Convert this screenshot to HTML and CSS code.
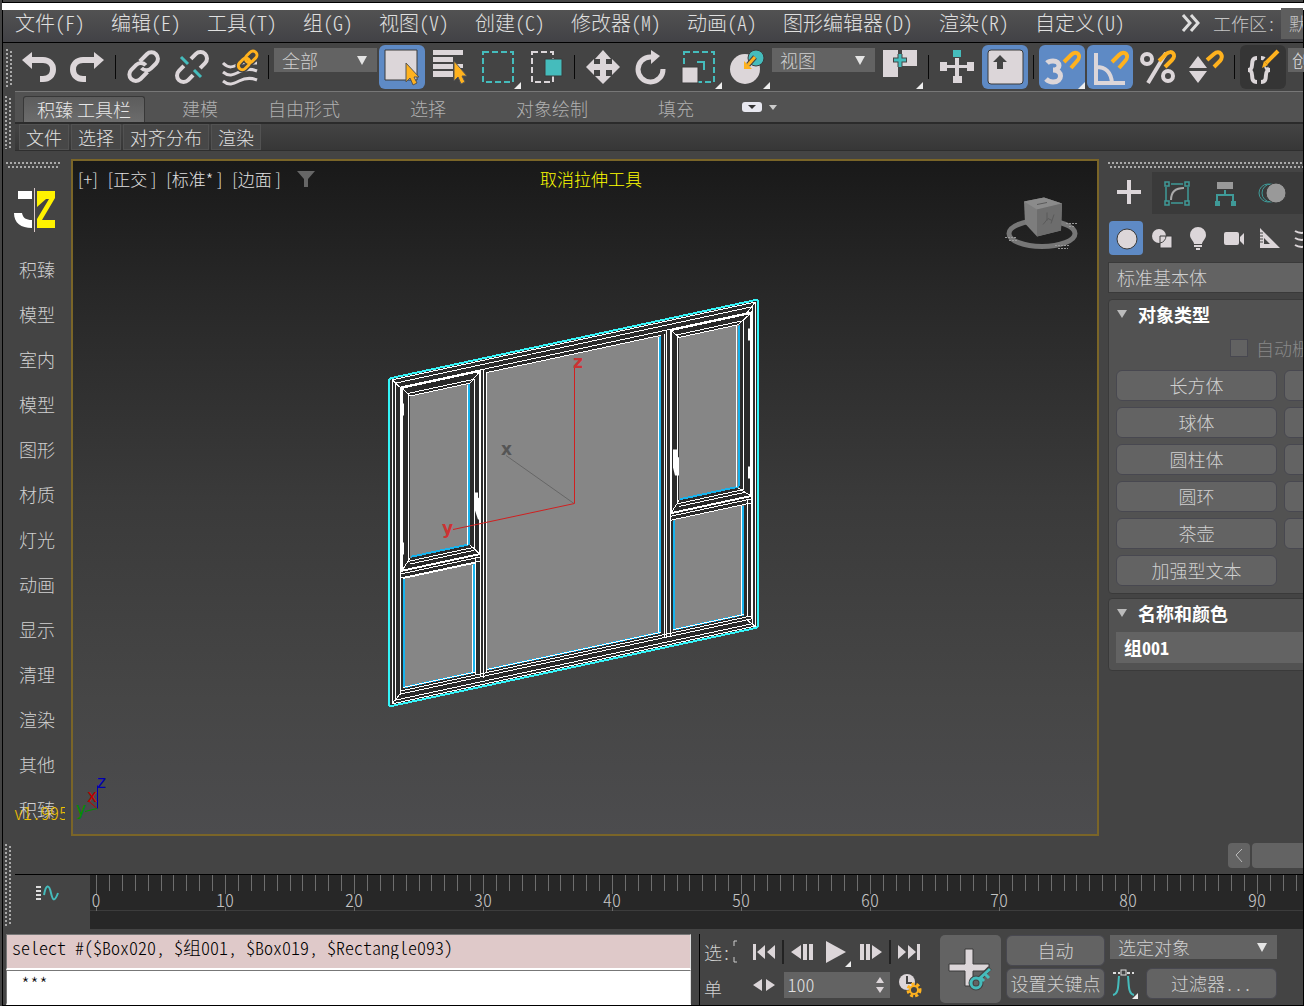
FILE: index.html
```
<!DOCTYPE html>
<html lang="zh-CN">

<head>
    <meta charset="UTF-8">
    <meta name="viewport" content="width=device-width, initial-scale=1.0">
    <title>积臻 工具栏</title>
    <link rel="stylesheet" href="styles.css">
</head>

<body>
    <div class="app">
        <div class="title-strip"></div>

        <!-- Menu Bar -->
        <nav class="menu-bar">
            <button class="menu-item">文件(F)</button>
            <button class="menu-item">编辑(E)</button>
            <button class="menu-item">工具(T)</button>
            <button class="menu-item">组(G)</button>
            <button class="menu-item">视图(V)</button>
            <button class="menu-item">创建(C)</button>
            <button class="menu-item">修改器(M)</button>
            <button class="menu-item">动画(A)</button>
            <button class="menu-item">图形编辑器(D)</button>
            <button class="menu-item">渲染(R)</button>
            <button class="menu-item">自定义(U)</button>
            <div class="workspace">
                <svg class="more-icon" viewBox="0 0 20 18"><path d="M2 1l7 8-7 8M10 1l7 8-7 8" /></svg>
                <label for="workspace">工作区:</label>
                <select id="workspace" class="workspace-select"><option>默认</option></select>
            </div>
        </nav>

        <!-- Main Toolbar -->
        <div class="toolbar">
            <div class="grip grip-left"></div>
            <button class="tool" aria-label="撤消"><svg viewBox="0 0 46 44"><path class="fl" d="M6 15L16 7v17z" /><path class="st" stroke-width="6" d="M15 15h12c6 0 10 4 10 9.500s-4 9.500-10 9.500h-3" /></svg></button>
            <button class="tool" aria-label="重做"><svg viewBox="0 0 46 44"><path class="fl" d="M40 15L30 7v17z" /><path class="st" stroke-width="6" d="M31 15H19c-6 0-10 4-10 9.500S13 34 19 34h3" /></svg></button>
            <span class="sep"></span>
            <button class="tool" aria-label="链接"><svg viewBox="0 0 46 44"><g class="st" stroke-width="4" transform="rotate(-45 23 22)"><path d="M22 28h-10a6.500 6.500 0 0 1 0-13h7a6.500 6.500 0 0 1 6.500 7" /><path d="M24 15h10a6.500 6.500 0 0 1 0 13h-7a6.500 6.500 0 0 1-6.500-7" /></g></svg></button>
            <button class="tool" aria-label="取消链接"><svg viewBox="0 0 46 44"><g class="st" stroke-width="4" transform="rotate(-45 23 22)"><path d="M18 28.500h-7a6.500 6.500 0 0 1 0-13h7" /><path d="M28 15.500h7a6.500 6.500 0 0 1 0 13h-7" /></g><path class="teal-st" stroke-width="3" d="M12 12l7 7M25 25l7 7" /></svg></button>
            <button class="tool" aria-label="绑定到空间扭曲"><svg viewBox="0 0 46 44"><path class="st" stroke-width="3" d="M6 18c6 6 10 4 16 1s11-1 18-1M6 27c6 5 10 3 16 0s11-4 18-1M6 36c6 5 10 3 16 0s11-4 18-1" /><g transform="rotate(-45 31 15)" fill="none" stroke="#444" stroke-width="6"><rect x="19" y="11" width="13" height="8" rx="4" /><rect x="29" y="11" width="13" height="8" rx="4" /></g><g transform="rotate(-45 31 15)" fill="none" stroke="#ffb21e" stroke-width="3"><rect x="19" y="11" width="13" height="8" rx="4" /><rect x="29" y="11" width="13" height="8" rx="4" /></g></svg></button>
            <span class="sep"></span>
            <div class="select-box tool-select"><select aria-label="选择过滤器"><option>全部</option></select></div>
            <button class="tool active" aria-label="选择对象"><svg viewBox="0 0 46 44"><path class="fl ol" d="M6 5h32v30H6z" /><path class="cursor" d="M27 18v19l4-4 3 7 4-2-3-6h5z" /></svg></button>
            <button class="tool" aria-label="按名称选择"><svg viewBox="0 0 46 44"><path class="fl" d="M6 5h30v5H6zM6 12h20v5H6zM6 19h20v5H6zM6 26h20v6H6zM30 19h6v4h-6z" /><path class="cursor" d="M27 16v20l4-4 3 7 4-2-3-6h5z" /></svg></button>
            <button class="tool" aria-label="矩形选择区域"><svg viewBox="0 0 46 44"><rect class="teal-st" x="8" y="7" width="30" height="30" stroke-width="2" stroke-dasharray="6 3" /><path class="corner" d="M46 37v7h-7z" /></svg></button>
            <button class="tool" aria-label="窗口/交叉"><svg viewBox="0 0 46 44"><rect class="st" x="9" y="7" width="21" height="30" stroke-width="2" stroke-dasharray="6 3" /><path class="teal ol" d="M22 14h17v17H22z" /></svg></button>
            <span class="sep"></span>
            <button class="tool" aria-label="选择并移动"><svg viewBox="0 0 46 44"><path class="fl" d="M23 5l8 9h-5v5h6v-5l8 8-8 8v-5h-6v6h5l-8 8-8-8h5v-6h-6v5l-8-8 8-8v5h6v-5h-5z" /></svg></button>
            <button class="tool" aria-label="选择并旋转"><svg viewBox="0 0 46 44"><path class="st" stroke-width="5" d="M25 12h-2a12.500 12.500 0 1 0 12 12" /><path class="fl" d="M23 5l9 6-9 8z" /></svg></button>
            <button class="tool" aria-label="选择并缩放"><svg viewBox="0 0 46 44"><rect class="teal-st" x="8" y="7" width="30" height="30" stroke-width="2" stroke-dasharray="6 3" /><path class="fl ol" d="M6 22h16v16H6z" /><path class="teal-st" stroke-width="2" d="M21 17h7v8" /><path class="corner" d="M46 37v7h-7z" /></svg></button>
            <button class="tool" aria-label="选择并放置"><svg viewBox="0 0 46 44"><circle class="fl" cx="21" cy="24" r="15" /><circle class="teal ol" cx="32" cy="13" r="8" /><path d="M31 12l-7 8" stroke="#444" stroke-width="5" /><path d="M31 12l-7 8" stroke="#ffb21e" stroke-width="3" /><path fill="#ffb21e" d="M20 16v8h8z" /><path class="corner" d="M46 37v7h-7z" /></svg></button>
            <div class="select-box tool-select"><select aria-label="参考坐标系"><option>视图</option></select></div>
            <button class="tool" aria-label="使用轴点中心"><svg viewBox="0 0 46 44"><path class="fl" d="M6 5h15v27H6zM25 5h15v16H25z" /><path d="M23 9v13M16 15h14" stroke="#444" stroke-width="5" /><path class="teal-st" d="M23 9v13M17 15h12" stroke-width="3" /><path class="corner" d="M46 37v7h-7z" /></svg></button>
            <span class="sep"></span>
            <button class="tool" aria-label="选择并操纵"><svg viewBox="0 0 46 44"><path class="fl" d="M21 13h4v7h8v-3h7v9h-7v-3h-8v8h3v7h-9v-7h2v-8h-8v3H6v-9h7v3h8z" /><path class="teal" d="M19 5h8v7h-8z" /></svg></button>
            <button class="tool active" aria-label="键盘快捷键覆盖切换"><svg viewBox="0 0 46 44"><rect class="fl ol" x="6" y="5" width="35" height="34" rx="3" /><path fill="#444" d="M18 10l7 7h-4v7h-6v-7h-4z" /></svg></button>
            <span class="sep"></span>
            <button class="tool active" aria-label="捕捉开关"><svg viewBox="0 0 46 44"><path class="st" stroke-width="5" d="M8 18c2-2 4-2 6-2 8 0 8 9 0 9 10 0 10 12 0 12-3 0-5-1-7-3" /><path class="magnet" d="M25 17l7-7c6-6 11 1 6 6l-6 7" /><path class="corner" d="M46 37v7h-7z" /></svg></button>
            <button class="tool active" aria-label="角度捕捉"><svg viewBox="0 0 46 44"><path class="st" stroke-width="4" d="M9 8v30h29M9 22c10 0 15 5 16 16" /><path class="magnet" d="M25 17l7-7c6-6 11 1 6 6l-6 7" /></svg></button>
            <button class="tool" aria-label="百分比捕捉"><svg viewBox="0 0 46 44"><g class="st" stroke-width="4"><circle cx="12" cy="14" r="5" /><circle cx="33" cy="31" r="5" /><path d="M31 8L13 38" /></g><path class="magnet" d="M24 16l7-7c6-5 11 1 6 6l-7 7" /></svg></button>
            <button class="tool" aria-label="微调器捕捉"><svg viewBox="0 0 46 44"><path class="fl" d="M15 11l9 12H6zM6 26h18l-9 12z" /><path class="magnet" d="M24 15l7-6c6-5 10 2 6 7l-6 6" /></svg></button>
            <span class="sep"></span>
            <button class="tool pressed" aria-label="编辑命名选择集"><svg viewBox="0 0 46 44"><path class="st" stroke-width="4" d="M17 13c-9 0-1 12-9 12 8 0 0 12 9 12M21 13c9 0 1 12 9 12-8 0 0 12-9 12" /><path stroke="#353535" stroke-width="8" d="M24 20L37 6" /><path stroke="#ffb21e" stroke-width="4" d="M26 18L38 6" /><path fill="#ffb21e" d="M22 23l2-7 4 4z" /></svg></button>
            <select class="name-select" aria-label="命名选择集"><option>创建</option></select>
        </div>

        <!-- Ribbon -->
        <div class="ribbon">
            <div class="grip"></div>
            <div class="ribbon-body">
                <div class="ribbon-tabs">
                    <button class="tab tab-current">积臻 工具栏</button>
                    <button class="tab tab-small">建模</button>
                    <button class="tab tab-small tab-last">自由形式</button>
                    <button class="tab">选择</button>
                    <button class="tab">对象绘制</button>
                    <button class="tab">填充</button>
                    <button class="ribbon-toggle" aria-label="最小化"><svg viewBox="0 0 36 14"><rect x="1" y="2" width="20" height="10" rx="3" fill="#e8e8f0" /><path fill="#333" d="M7 5h8l-4 4z" /><path fill="#ccc" d="M28 5h8l-4 5z" /></svg></button>
                </div>
                <div class="ribbon-row">
                    <button class="ribbon-button">文件</button>
                    <button class="ribbon-button">选择</button>
                    <button class="ribbon-button">对齐分布</button>
                    <button class="ribbon-button">渲染</button>
                </div>
            </div>
        </div>

        <div class="workarea">
            <!-- Plugin Sidebar -->
            <aside class="sidebar">
                <div class="grip-h"></div>
                <svg class="logo" viewBox="0 0 42 44"><path fill="#fff" d="M4 3h14v8H4zM18 40c-11 0-18-5-18-15h8c1 5 4 7 10 7z" /><path stroke="#d8c8c8" d="M20.500 0v44" /><path fill="#fff200" d="M23 3h18v7L28 32h13v8H23v-9l12-20-3 0-9 8z" /></svg>
                <button class="side-item">积臻</button>
                <button class="side-item">模型</button>
                <button class="side-item">室内</button>
                <button class="side-item">模型</button>
                <button class="side-item">图形</button>
                <button class="side-item">材质</button>
                <button class="side-item">灯光</button>
                <button class="side-item">动画</button>
                <button class="side-item">显示</button>
                <button class="side-item">清理</button>
                <button class="side-item">渲染</button>
                <button class="side-item">其他</button>
                <button class="side-item">积臻<span class="version">v1.995</span></button>
            </aside>

            <!-- Viewport -->
            <main class="viewport">
                <svg class="scene" viewBox="73 161 1024 672" preserveAspectRatio="xMidYMid meet">
                    <!-- window frame, drawn straight and sheared into the view -->
                    <g class="crisp" transform="translate(389 378) skewY(-12.08)">
                        <rect class="frame" x="1" y="0" width="368" height="328" />
                        <path class="edge" d="M3 2h363v324H3zM6 6h357v317H6zM11 11h351v307H11zM12 315h350M3 2l8 9M366 2l-8 9M3 326l8-8M366 326l-8-8" />
                        <path class="edge" d="M86 198v117M91 11v307M94 11v309M97 14v301M275 14v303M277 12v307M281 12v306M12 198h79M12 202h79M281 198h81M281 202h81M358 198v116" />
                        <rect class="sash" x="13" y="12" width="78" height="183" />
                        <rect class="edge" x="19" y="19" width="66" height="168" />
                        <path class="edge" d="M13 12l8 10M91 12L81 22M13 195l8-11M91 195l-10-11M21 190h64" />
                        <rect class="sash" x="282" y="12" width="80" height="183" />
                        <rect class="edge" x="288" y="18" width="66" height="169" />
                        <path class="edge" d="M282 12l8 9M362 12l-13 9M282 195l8-11M362 195l-13-11M290 190h66" />
                        <path class="glass" d="M21 22h60v162H21zM14 203h72v110H14zM98 15h174v298H98zM290 21h60v163h-60zM284 202h71v111h-71z" />
                        <path class="blue" d="M80 23v160M85 204v108M271 16v296M350 22v161M354 203v109M22 183h58M291 183h58M15 204v108M285 203v109M99 312h172M15 312h71M285 312h70" />
                        <path class="edge" d="M21 22h60M14 203h72M98 15h174M290 21h60M284 202h71M98 312h174M14 312h72M284 312h71" />
                        <path class="edge" d="M78 23v160M83 204v108M269 16v296M347 22v161M352 203v109" />
                        <rect class="outline" x="0" y="0" width="369" height="328" rx="3" />
                    </g>
                    <path fill="#fff" d="M400 403h4v12h-4zM400 542h4v12h-4zM475 492h3v5l3 2v20h-3l-3-9zM673 449h4v7l2 1v18h-4l-2-8zM748 328h4v12h-4zM748 466h4v12h-4z" />
                    <!-- gizmo -->
                    <path stroke="#666" d="M574 503l-68-48" />
                    <path stroke="#d02020" fill="none" d="M574.500 366v137L453 529" />
                    <g class="axis-label">
                        <text x="573" y="367" fill="#c33">z</text>
                        <text x="501" y="454" fill="#555">x</text>
                        <text x="442" y="533" fill="#c33">y</text>
                    </g>
                    <!-- world axis -->
                    <path stroke="#0000b0" d="M97.500 785v23" />
                    <path stroke="#c00000" d="M97 808l-9-8" />
                    <path stroke="#009000" d="M97 808l-12 3" />
                    <g class="axis-label axis-small">
                        <text x="97" y="787" fill="#0000b0">z</text>
                        <text x="87" y="801" fill="#c00000">x</text>
                        <text x="76" y="814" fill="#009000">y</text>
                    </g>
                    <!-- view cube -->
                    <ellipse cx="1042" cy="233" rx="33" ry="13" fill="none" stroke="#777" stroke-width="5" />
                    <path stroke="#999" fill="none" stroke-dasharray="2 1" d="M1005 237h11M1009 240h8M1055 245h14M1058 248h10M1066 223h11M1069 226h6" />
                    <path fill="#7d7d7d" d="M1024 201l20-4 18 6-1 27-24 6-12-13z" />
                    <path fill="#8b8b8b" d="M1024 201l20-4 18 6-25 6z" />
                    <path fill="#6d6d6d" d="M1037 209l25-6-1 27-24 6z" />
                    <path stroke="#5a5a5a" fill="none" d="M1037 204l10-2M1043 224l5-6 4 2M1047 212v8M1054 214l-3 9" />
                </svg>
                <div class="view-labels">
                    <button>[+]</button>
                    <button>[正交 ]</button>
                    <button>[标准* ]</button>
                    <button>[边面 ]</button>
                    <svg class="filter-icon" viewBox="0 0 18 16"><path fill="#666" d="M0 0h18l-7 8v8H7V8z" /></svg>
                </div>
                <div class="view-message">取消拉伸工具</div>
            </main>

            <!-- Command Panel -->
            <aside class="panel">
                <div class="grip-h"></div>
                <div class="panel-tabs">
                    <button class="panel-tab panel-tab-current" aria-label="创建"><svg viewBox="0 0 46 42"><path class="fl" d="M21 8h4v10h10v4H25v10h-4V22H11v-4h10z" /></svg></button>
                    <button class="panel-tab" aria-label="修改"><svg viewBox="0 0 46 42"><g stroke="#3f9a98" fill="none" stroke-width="1.500"><path d="M17 12h12M12 15v14M34 15v14M17 31h12" /><path d="M11 10h4v4h-4zM31 10h4v4h-4zM11 29h4v4h-4zM31 29h4v4h-4z" /></g><path d="M17 28c0-8 4-12 13-12" stroke="#aaa" stroke-width="2" fill="none" /></svg></button>
                    <button class="panel-tab" aria-label="层次"><svg viewBox="0 0 46 42"><path fill="#999" d="M15 10h16v7H15z" /><path d="M23 18v5M15 29v-6h16v6" stroke="#3f9a98" stroke-width="2" fill="none" /><path fill="#3f9a98" d="M13 29h5v5h-5zM29 29h5v5h-5z" /></svg></button>
                    <button class="panel-tab" aria-label="运动"><svg viewBox="0 0 46 42"><g stroke="#3f9a98" fill="none"><circle cx="18" cy="21" r="9" /><circle cx="21" cy="21" r="9" /></g><circle cx="26" cy="21" r="10" fill="#999" stroke="#3a3a3a" /></svg></button>
                    <button class="panel-tab" aria-label="显示"></button>
                </div>
                <div class="categories">
                    <button class="category active" aria-label="几何体"><svg viewBox="0 0 34 34"><circle class="fl ol" cx="18" cy="18" r="10" /></svg></button>
                    <button class="category" aria-label="图形"><svg viewBox="0 0 34 34"><circle class="fl" cx="14" cy="15" r="7" /><path class="fl ol" d="M15 15h12v12H15z" /><path d="M21 15a7 7 0 0 1-6 7" fill="none" stroke="#444" /></svg></button>
                    <button class="category" aria-label="灯光"><svg viewBox="0 0 34 34"><path class="fl" d="M17 6a8 8 0 0 1 8 8c0 4-4 6-4 9h-8c0-3-4-5-4-9a8 8 0 0 1 8-8zM13 24h8v2h-8zM15 27h4v2h-4z" /></svg></button>
                    <button class="category" aria-label="摄影机"><svg viewBox="0 0 34 34"><rect class="fl" x="7" y="11" width="15" height="13" rx="2" /><path class="fl" d="M23 16l4-4v12l-4-4z" /></svg></button>
                    <button class="category" aria-label="辅助对象"><svg viewBox="0 0 34 34"><path class="fl" fill-rule="evenodd" d="M7 7l20 20H7zM11 17v6h6z" /><path stroke="#444" d="M7 12h3M7 15h3M7 18h3M7 21h3" /></svg></button>
                    <button class="category" aria-label="空间扭曲"><svg viewBox="0 0 34 34"><path class="st" stroke-width="2" d="M6 10c6 4 9 1 15 1M6 17c6 4 9 1 15 1M6 24c6 4 9 1 15 1" /></svg></button>
                </div>
                <select class="type-select" aria-label="类别"><option>标准基本体</option></select>
                <section class="rollout">
                    <h2>对象类型</h2>
                    <label class="autogrid"><input type="checkbox" disabled>自动栅格</label>
                    <div class="object-grid">
                        <button>长方体</button><button>圆锥体</button>
                        <button>球体</button><button>几何球体</button>
                        <button>圆柱体</button><button>管状体</button>
                        <button>圆环</button><button>四棱锥</button>
                        <button>茶壶</button><button>平面</button>
                        <button>加强型文本</button>
                    </div>
                </section>
                <section class="rollout">
                    <h2>名称和颜色</h2>
                    <input class="name-input" type="text" value="组001" aria-label="名称">
                </section>
            </aside>
        </div>

        <!-- Timeline -->
        <div class="timeline">
            <div class="grip"></div>
            <div class="timeline-body">
                <div class="time-slider">
                    <button class="slider-prev" aria-label="上一帧"><svg viewBox="0 0 22 25"><path d="M14 6l-6 6 6 7" fill="none" stroke="#bbb" /></svg></button>
                    <button class="slider-thumb" aria-label="时间滑块"></button>
                </div>
                <div class="track">
                    <button class="curve-toggle" aria-label="迷你曲线编辑器"><svg viewBox="0 0 24 18"><path fill="#ddd" d="M1 1h5v2H1zM1 5h5v2H1zM1 9h5v2H1zM1 13h5v2H1z" /><path d="M9 10c2-11 5-11 7-2s4 8 7 0" fill="none" stroke="#45bcbc" stroke-width="2" /></svg></button>
                    <div class="ruler">
                        <svg class="defs" width="0" height="0"><symbol id="ticks" viewBox="0 0 129 36"><path stroke="#6e6e6e" d="M.5 0v19M.5 32v4M13.500 0v16M26.500 0v16M39.500 0v16M52.500 0v16M65.500 0v16M77.500 0v16M90.500 0v16M103.500 0v16M116.500 0v16" /></symbol></svg>
                        <div class="decade"><svg><use href="#ticks" /></svg><span>0</span></div>
                        <div class="decade"><svg><use href="#ticks" /></svg><span>10</span></div>
                        <div class="decade"><svg><use href="#ticks" /></svg><span>20</span></div>
                        <div class="decade"><svg><use href="#ticks" /></svg><span>30</span></div>
                        <div class="decade"><svg><use href="#ticks" /></svg><span>40</span></div>
                        <div class="decade"><svg><use href="#ticks" /></svg><span>50</span></div>
                        <div class="decade"><svg><use href="#ticks" /></svg><span>60</span></div>
                        <div class="decade"><svg><use href="#ticks" /></svg><span>70</span></div>
                        <div class="decade"><svg><use href="#ticks" /></svg><span>80</span></div>
                        <div class="decade"><svg><use href="#ticks" /></svg><span>90</span></div>
                    </div>
                </div>
            </div>
        </div>

        <!-- Status Bar -->
        <footer class="status">
            <div class="listener">
                <input class="listener-macro" type="text" readonly aria-label="宏录制器" value="select #($Box020, $组001, $Box019, $Rectangle093)">
                <input class="listener-script" type="text" aria-label="脚本" value=" ***">
            </div>
            <div class="prompt">
                <span>选:</span>
                <svg viewBox="0 0 6 24"><path d="M5 1H2v5M2 17v5h3" fill="none" stroke="#ccc" /></svg>
                <span>单</span>
            </div>
            <div class="playback">
                <div class="transport">
                    <button class="play-btn" aria-label="转至开头"><svg viewBox="0 0 26 22"><path class="fl" d="M2 3h3v16H2zM14 4v14l-8-7zM24 4v14l-8-7z" /></svg></button>
                    <span class="line"></span>
                    <button class="play-btn" aria-label="上一帧"><svg viewBox="0 0 26 22"><path class="fl" d="M12 4v14L2 11zM14 3h4v16h-4zM20 3h4v16h-4z" /></svg></button>
                    <button class="play-btn play-main" aria-label="播放"><svg viewBox="0 0 34 30"><path class="fl" d="M7 4l20 11L7 26z" /><path class="corner" d="M32 24v6h-6z" /></svg></button>
                    <button class="play-btn" aria-label="下一帧"><svg viewBox="0 0 26 22"><path class="fl" d="M2 3h4v16H2zM8 3h4v16H8zM14 4v14l10-7z" /></svg></button>
                    <span class="line"></span>
                    <button class="play-btn" aria-label="转至结尾"><svg viewBox="0 0 26 22"><path class="fl" d="M2 4v14l8-7zM12 4v14l8-7zM21 3h3v16h-3z" /></svg></button>
                </div>
                <div class="transport">
                    <button class="play-btn" aria-label="关键点模式"><svg viewBox="0 0 26 22"><path class="fl" d="M11 5v12l-9-6zM15 5v12l9-6z" /></svg></button>
                    <div class="frame-field">
                        <input type="text" value="100" aria-label="当前帧">
                        <svg viewBox="0 0 8 16"><path class="fl" d="M4 0l4 6H0zM0 10h8l-4 6z" /></svg>
                    </div>
                    <button class="play-btn" aria-label="时间配置"><svg viewBox="0 0 26 26"><circle class="fl" cx="11" cy="10" r="8" /><path stroke="#444" fill="none" stroke-width="2" d="M11 4v7h5" /><circle cx="18" cy="18" r="6" fill="none" stroke="#ffb21e" stroke-width="3" stroke-dasharray="3 2" /><circle cx="18" cy="18" r="4" fill="#444" stroke="#ffb21e" stroke-width="2" /></svg></button>
                </div>
            </div>
            <button class="set-key" aria-label="设置关键点"><svg viewBox="0 0 61 66"><path class="fl ol" d="M25 13h8v15h16v7H33v15h-8V35H9v-7h16z" /><g stroke="#444" stroke-width="5" fill="none"><circle cx="36" cy="47" r="5" /><path d="M39 43l11-11" /></g><g stroke="#45bcbc" stroke-width="3" fill="none"><circle cx="36" cy="47" r="5" /><path d="M39 43l11-10M45 38l4 4M41 42l3 3" /></g></svg></button>
            <div class="key-buttons">
                <button class="flat">自动</button>
                <button class="flat">设置关键点</button>
            </div>
            <div class="key-filters">
                <div class="select-box key-select"><select aria-label="关键点对象"><option>选定对象</option></select></div>
                <div class="filter-row">
                    <button class="tangent" aria-label="新建关键点切线"><svg viewBox="0 0 28 30"><path d="M3 26c6-1 5-10 6-19M24 26c-6-1-5-10-6-19" fill="none" stroke="#45bcbc" stroke-width="2" /><path stroke="#ddd" d="M3 4h7M17 4h7" stroke-dasharray="3 2" stroke-width="2" /><rect x="11" y="1" width="5" height="5" fill="#444" stroke="#ddd" /><path class="corner" d="M28 24v6h-6z" /></svg></button>
                    <button class="flat filter-button">过滤器...</button>
                </div>
            </div>
        </footer>
    </div>
</body>

</html>
```

FILE: styles.css
```
/* Base Styles */
* {
    box-sizing: border-box;
}

body {
    margin: 0;
    background-color: #fff;
    color: #e0e0e0;
    font-family: "Noto Sans CJK SC", sans-serif;
    font-size: 18px;
    font-weight: 300;
    line-height: 24px;
    font-feature-settings: "hwid";
}

button, select, input {
    margin: 0;
    padding: 0;
    border: 0;
    border-radius: 0;
    background: none;
    color: inherit;
    font: inherit;
    font-feature-settings: inherit;
    white-space: nowrap;
}

select {
    appearance: none;
}

svg {
    display: block;
    flex: none;
}

.app {
    display: flex;
    flex-direction: column;
    height: 100vh;
    padding-top: 2px;
    margin-right: 2px;
    border-left: 2px solid #444;
    overflow: hidden;
    background-color: #444;
    box-shadow: inset 1px 0 #000, inset -1px 0 #000, inset 0 -1px #000;
    padding-left: 1px;
    padding-right: 1px;
    padding-bottom: 1px;
}

/* Icon paints */
.fl { fill: #dcd6d9; }
.st { fill: none; stroke: #dcd6d9; }
.ol { stroke: #3a3a3a; }
.teal { fill: #45bcbc; }
.teal-st { fill: none; stroke: #45bcbc; }
.corner { fill: #eee; }
.cursor { fill: #ffb21e; stroke: #555; stroke-width: 1px; }
.magnet { fill: none; stroke: #ffb21e; stroke-width: 4px; }

/* Drag grips */
.grip {
    flex: none;
    width: 6px;
    background-image: linear-gradient(#aaa 2px, transparent 2px), linear-gradient(#aaa 2px, transparent 2px);
    background-size: 2px 4px;
    background-position: 0 0, 4px 2px;
    background-repeat: repeat-y;
}

.grip-h {
    flex: none;
    height: 6px;
    background-image: linear-gradient(to right, #aaa 2px, transparent 2px), linear-gradient(to right, #aaa 2px, transparent 2px);
    background-size: 4px 2px;
    background-position: 0 0, 2px 4px;
    background-repeat: repeat-x;
}

/* Menu Bar */
.title-strip {
    flex: none;
    height: 8px;
    margin: 0 -1px 0 -3px;
    border-top: 1px solid #000;
    background-color: #fff;
}

.menu-bar {
    display: flex;
    flex: none;
    align-items: center;
    gap: 26px;
    height: 33px;
    padding-left: 12px;
    padding-bottom: 6px;
    border-bottom: 1px solid #000;
    background: linear-gradient(#525252, #424246);
    font-size: 20px;
}

.menu-item {
    flex: none;
}

.workspace {
    display: flex;
    flex: none;
    align-items: center;
    gap: 5px;
    margin-left: auto;
    font-size: 18px;
    color: #c4c4c4;
}

.more-icon {
    width: 20px;
    height: 18px;
    margin-right: 7px;
    fill: none;
    stroke: #ddd;
    stroke-width: 3px;
}

.workspace-select {
    width: 22px;
    height: 31px;
    padding-left: 8px;
    background-color: #5e5e5e;
}

/* Toolbar */
.toolbar {
    display: flex;
    flex: none;
    gap: 2px;
    height: 48px;
    padding-top: 2px;
    padding-left: 3px;
}

.grip-left {
    height: 38px;
    margin: 4px 2px 0 0;
}

.tool {
    flex: none;
    width: 46px;
    height: 44px;
    border-radius: 6px;
}

.active {
    background-color: #5e8ac5;
}

.pressed {
    background-color: #353535;
}

.sep {
    flex: none;
    width: 1px;
    height: 24px;
    margin: 10px 3px;
    background-color: #080808;
}

.select-box {
    position: relative;
    flex: none;
}

.select-box select {
    width: 100%;
    height: 24px;
    padding-left: 8px;
    background-color: #636363;
    color: #cfcfcf;
}

.select-box::after {
    content: "";
    position: absolute;
    top: 8px;
    right: 10px;
    border: 5px solid transparent;
    border-top: 9px solid #e4e4e4;
    border-bottom: 0;
    pointer-events: none;
}

.tool-select {
    width: 103px;
    height: 24px;
    margin-top: 3px;
}

.name-select {
    flex: none;
    width: 40px;
    height: 24px;
    margin-top: 3px;
    padding-left: 4px;
    background-color: #636363;
}

/* Ribbon */
.ribbon {
    display: flex;
    flex: none;
    padding-left: 2px;
    font-feature-settings: normal;
}

.ribbon .grip {
    margin: 5px 4px 2px 0;
}

.ribbon-body {
    flex: 1;
    min-width: 0;
}

.ribbon-tabs {
    display: flex;
    align-items: flex-end;
    height: 31px;
    padding-left: 8px;
    border-top: 1px solid #777;
    background-color: #525252;
}

.tab {
    flex: none;
    width: 124px;
    height: 26px;
    padding-bottom: 3px;
    color: #b0b0b0;
}

.tab-current {
    width: 122px;
    margin-right: 3px;
    border: 1px solid #383838;
    border-bottom: 0;
    border-radius: 3px 3px 0 0;
    background: linear-gradient(#5c5c5c, #6c6c6c);
    color: #e8e8e8;
}

.tab-small {
    width: 104px;
}

.tab-last {
    margin-right: 10px;
}

.ribbon-toggle {
    align-self: center;
    width: 36px;
    height: 14px;
    margin-left: 3px;
}

.ribbon-toggle svg {
    width: 36px;
    height: 14px;
}

.ribbon-row {
    display: flex;
    gap: 2px;
    height: 29px;
    padding-left: 4px;
    border-top: 2px solid #2b2b2b;
    border-bottom: 1px solid #2e2e2e;
    background: linear-gradient(#444, #373737);
}

.ribbon-button {
    padding: 0 6px 2px;
    border: 1px solid #525252;
    background-color: #474747;
}

/* Work area */
.workarea {
    display: flex;
    flex: 1;
    min-height: 0;
    padding: 8px 0 7px;
}

.sidebar {
    display: flex;
    flex: none;
    flex-direction: column;
    align-items: center;
    width: 68px;
    padding-top: 3px;
    color: #d0d0d0;
}

.sidebar .grip-h {
    width: 54px;
    margin-bottom: 20px;
    margin-right: 8px;
}

.logo {
    width: 42px;
    height: 44px;
    margin: 0 4px 14px 0;
}

.side-item {
    position: relative;
    flex: none;
    width: 68px;
    height: 45px;
}

.version {
    position: absolute;
    left: 11px;
    top: 14px;
    width: 51px;
    overflow: hidden;
    color: #f0c000;
    text-align: left;
}

.viewport {
    position: relative;
    flex: 1;
    min-width: 0;
    border: 2px solid #7a6528;
    background: linear-gradient(#191919, #282828 20%, #3a3a3a 50%, #464646 80%, #4c4c4e);
    font-feature-settings: normal;
}

.scene {
    position: absolute;
    inset: 0;
    width: 100%;
    height: 100%;
}

.crisp { shape-rendering: crispEdges; }
.frame { fill: #2b2b2b; }
.edge { fill: none; stroke: #fff; stroke-width: 1px; }
.sash { fill: #2a2a2a; stroke: #fff; stroke-width: 2px; }
.glass { fill: #868686; }
.blue { stroke: #18b4ee; stroke-width: 2px; }
.outline { fill: none; stroke: #34f4f8; stroke-width: 2px; }

.axis-label {
    font-family: "DejaVu Sans", sans-serif;
    font-size: 17px;
    font-weight: bold;
}

.axis-small {
    font-weight: normal;
}

.view-labels {
    position: relative;
    display: flex;
    align-items: center;
    gap: 10px;
    padding: 6px 5px;
    font-size: 17px;
}

.filter-icon {
    width: 18px;
    height: 16px;
    margin-left: 6px;
}

.view-message {
    position: absolute;
    left: 467px;
    top: 6px;
    color: #ff0;
    font-size: 17px;
}

/* Command Panel */
.panel {
    flex: none;
    width: 204px;
    padding: 3px 0 0 7px;
    overflow: hidden;
}

.panel .grip-h {
    margin: 0 0 4px 2px;
}

.panel-tabs {
    display: flex;
    gap: 2px;
    height: 42px;
    background-color: #3a3a3a;
}

.panel-tab {
    flex: none;
    width: 46px;
    height: 42px;
}

.panel-tab-current {
    background-color: #444;
}

.categories {
    display: flex;
    gap: 2px;
    padding: 7px 0 7px 3px;
}

.category {
    flex: none;
    width: 34px;
    height: 34px;
    border-radius: 4px;
}

.type-select {
    width: 340px;
    height: 31px;
    margin-left: 2px;
    padding-left: 8px;
    padding-bottom: 1px;
    border: 1px solid #3a3a3a;
    background-color: #636363;
    color: #d0d0d0;
}

.rollout {
    width: 345px;
    margin: 6px 0 0 2px;
    padding: 2px 7px 7px;
    border: 1px solid #3a3a3a;
    border-radius: 4px;
    background-color: #525252;
}

.rollout + .rollout {
    margin-top: 4px;
}

.rollout h2 {
    position: relative;
    margin: 0;
    padding-left: 22px;
    color: #fff;
    font-size: 18px;
    font-weight: bold;
    line-height: 24px;
}

.rollout h2::before {
    content: "";
    position: absolute;
    left: 1px;
    top: 8px;
    border: 5px solid transparent;
    border-top: 8px solid #bbb;
    border-bottom: 0;
}

.autogrid {
    display: flex;
    align-items: center;
    gap: 8px;
    height: 44px;
    padding-left: 114px;
    color: #888;
}

.autogrid input {
    appearance: none;
    width: 18px;
    height: 18px;
    border: 1px solid #484850;
    background-color: #626262;
}

.object-grid {
    display: grid;
    grid-template-columns: 161px 161px;
    gap: 6px 7px;
}

.object-grid button, .flat {
    height: 31px;
    padding-bottom: 1px;
    border: 1px solid #484850;
    border-radius: 6px;
    background-color: #636363;
    color: #d0d0d0;
}

.name-input {
    display: block;
    width: 329px;
    height: 31px;
    margin-top: 7px;
    padding-left: 8px;
    padding-bottom: 2px;
    background-color: #636363;
    color: #fff;
    font-weight: bold;
}

/* Timeline */
.timeline {
    display: flex;
    flex: none;
    padding-left: 2px;
}

.timeline .grip {
    margin: 1px 4px 3px 0;
}

.timeline-body {
    flex: 1;
    min-width: 0;
}

.time-slider {
    display: flex;
    justify-content: flex-end;
    gap: 2px;
    height: 31px;
}

.slider-prev, .slider-thumb {
    width: 22px;
    height: 25px;
    border-radius: 4px;
    background-color: #636363;
}

.slider-thumb {
    width: 51px;
    border-radius: 4px 0 0 4px;
}

.track {
    display: flex;
    height: 55px;
    border-top: 1px solid #000;
}

.curve-toggle {
    display: flex;
    justify-content: center;
    align-items: flex-start;
    width: 75px;
    padding: 10px 12px 0 0;
}

.curve-toggle svg {
    width: 24px;
    height: 18px;
}

.ruler {
    position: relative;
    display: flex;
    flex: 1;
    min-width: 0;
    padding-left: 6px;
    overflow: hidden;
    background: linear-gradient(#3c3c3c, #3c3c3c) 0 35px / 100% 1px no-repeat #272727;
}

.defs {
    position: absolute;
}

.decade {
    flex: none;
    width: 129px;
}

.decade svg {
    width: 129px;
    height: 36px;
}

.decade span {
    display: block;
    width: 24px;
    margin: -24px 0 0 -12px;
    color: #c4c4c4;
    text-align: center;
}

/* Status Bar */
.status {
    display: flex;
    flex: none;
    height: 76px;
    padding: 5px 26px 0 3px;
}

.listener {
    display: flex;
    flex: 1;
    flex-direction: column;
    min-width: 0;
    color: #000;
}

.listener input {
    flex: 1;
    min-height: 0;
    padding: 0 0 8px 5px;
    border: 1px solid #777;
    border-right-color: #ddd;
    border-bottom: 2px solid #fff;
}

.listener .listener-macro {
    background-color: #dfc9c9;
}

.listener .listener-script {
    background-color: #fff;
}

.prompt {
    display: grid;
    grid-template-columns: 28px 10px;
    grid-template-rows: 36px 36px;
    align-items: center;
    margin-left: 8px;
    padding-left: 4px;
    border-left: 1px solid #000;
    color: #d0d0d0;
}

.prompt svg {
    width: 6px;
    height: 24px;
}

.playback {
    display: flex;
    flex-direction: column;
    width: 171px;
    margin-left: 9px;
    padding-top: 1px;
}

.transport {
    display: flex;
    flex: none;
    align-items: center;
    justify-content: space-between;
    height: 33px;
}

.play-btn {
    flex: none;
    width: 26px;
}

.play-main {
    width: 34px;
    height: 30px;
}

.line {
    width: 2px;
    height: 24px;
    background-color: #222;
}

.frame-field {
    display: flex;
    align-items: center;
    width: 106px;
    height: 26px;
    padding: 0 6px 0 4px;
    background-color: #636363;
}

.frame-field input {
    flex: 1;
    min-width: 0;
    padding-bottom: 2px;
}

.frame-field svg {
    width: 8px;
    height: 16px;
}

.set-key {
    flex: none;
    width: 61px;
    height: 68px;
    margin: 1px 5px 0 18px;
    border-radius: 5px;
    background-color: #636363;
}

.key-buttons {
    display: flex;
    flex: none;
    flex-direction: column;
    gap: 2px;
    width: 99px;
    margin: 1px 5px 0 0;
}

.key-filters {
    flex: none;
    width: 167px;
    margin-top: 1px;
}

.filter-row {
    display: flex;
    align-items: center;
    gap: 8px;
    margin-top: 9px;
}

.tangent {
    width: 28px;
}

.filter-button {
    flex: 1;
}
```
